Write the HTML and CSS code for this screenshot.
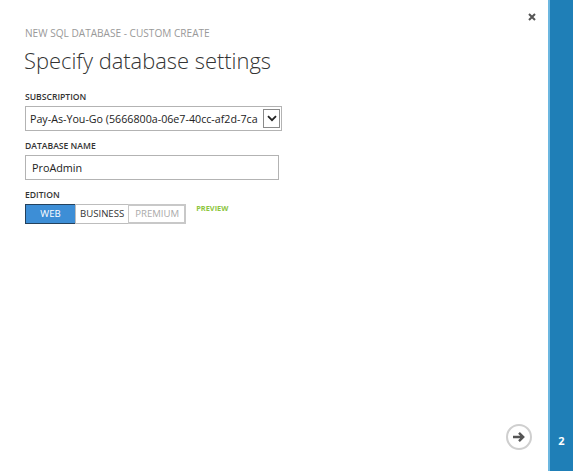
FILE: index.html
```html
<!DOCTYPE html>
<html>
<head>
<meta charset="utf-8">
<link rel="stylesheet" href="styles.css">
</head>
<body>
<div class="wizard">
  <div class="main">
    <div class="content">
      <div class="kicker">NEW SQL DATABASE - CUSTOM CREATE</div>
      <h1 class="title">Specify database settings</h1>
      <div class="field">
        <div class="label">SUBSCRIPTION</div>
        <div class="select">
          <span class="select-text">Pay-As-You-Go (5666800a-06e7-40cc-af2d-7ca</span>
          <span class="select-btn">
            <svg width="10" height="7" viewBox="0 0 10 7"><path d="M1 1.2 L5 5.2 L9 1.2" fill="none" stroke="#222" stroke-width="1.8"/></svg>
          </span>
        </div>
      </div>
      <div class="field">
        <div class="label">DATABASE NAME</div>
        <div class="input">ProAdmin</div>
      </div>
      <div class="field">
        <div class="label">EDITION</div>
        <div class="edition-row">
          <div class="seg">
            <span class="seg-item active">WEB</span>
            <span class="seg-item">BUSINESS</span>
            <span class="seg-item disabled">PREMIUM</span>
          </div>
          <span class="preview">PREVIEW</span>
        </div>
      </div>
    </div>
    <div class="footer">
      <span class="next">
        <svg width="14" height="12" viewBox="0 0 14 12"><path d="M1 6 H11 M7 1.8 L11.2 6 L7 10.2" fill="none" stroke="#555" stroke-width="2.4"/></svg>
      </span>
    </div>
    <span class="close">
      <svg width="8" height="8" viewBox="0 0 8 8"><path d="M1 1 L7 7 M7 1 L1 7" stroke="#555" stroke-width="2"/></svg>
    </span>
  </div>
  <div class="side">
    <span class="step">2</span>
  </div>
</div>
</body>
</html>
```
FILE: styles.css
```css
html, body {
  margin: 0;
  padding: 0;
  background: #fff;
}
body {
  font-family: "Open Sans", "Segoe UI", sans-serif;
  color: #222;
}
.wizard {
  display: flex;
  width: 573px;
  height: 471px;
}
.main {
  position: relative;
  flex: 1;
  display: flex;
  flex-direction: column;
  justify-content: space-between;
}
.content {
  padding: 26px 0 0 25px;
}
.kicker {
  font-size: 10.1px;
  color: #999;
  line-height: 14px;
}
.title {
  margin: 7px 0 16px -1px;
  font-size: 21.9px;
  font-weight: 300;
  color: #333;
  line-height: 28px;
}
.field {
  margin-top: 9px;
}
.title + .field {
  margin-top: 0;
}
.label {
  font-size: 8.6px;
  font-weight: 600;
  color: #333;
  line-height: 12px;
  margin-bottom: 3px;
}
.select {
  display: flex;
  align-items: center;
  width: 251px;
  height: 23px;
  border: 1px solid #b3b3b3;
  padding-left: 4px;
}
.select-text {
  flex: 1;
  font-size: 10.7px;
  color: #222;
  white-space: nowrap;
  overflow: hidden;
}
.select-btn {
  width: 15px;
  height: 17px;
  border: 1px solid #8a8a8a;
  display: flex;
  align-items: center;
  justify-content: center;
  margin-right: 1px;
  background: #fff;
}
.input {
  width: 246px;
  height: 23px;
  border: 1px solid #b3b3b3;
  padding-left: 6px;
  font-size: 10.8px;
  line-height: 23px;
  color: #222;
}
.edition-row {
  display: flex;
  align-items: flex-start;
}
.seg {
  display: flex;
}
.seg-item {
  height: 18px;
  border: 1px solid #bdbdbd;
  font-size: 9.6px;
  line-height: 18px;
  padding: 0 4px;
  color: #333;
  margin-left: -1px;
}
.seg-item:first-child {
  margin-left: 0;
}
.seg-item.active {
  background: #3d8ed6;
  color: #fff;
  border: 1px solid #24415c;
  width: 49px;
  padding: 0;
  text-align: center;
}
.seg-item.disabled {
  color: #aaa;
  border-color: #c8c8c8;
  border-width: 2px 2px 2px 1px;
  height: 16px;
  line-height: 16px;
  padding: 0 5px 0 6px;
}
.preview {
  margin: 0 0 0 10px;
  font-size: 7.4px;
  font-weight: 700;
  color: #8dc63f;
  line-height: 8px;
}
.footer {
  display: flex;
  justify-content: flex-end;
  padding: 0 16px 21px 0;
}
.next {
  width: 22px;
  height: 22px;
  border: 2px solid #cfcfcf;
  border-radius: 50%;
  display: flex;
  align-items: center;
  justify-content: center;
}
.close {
  position: absolute;
  top: 13px;
  right: 12px;
  display: flex;
}
.side {
  width: 23px;
  background: #1f7fb7;
  border-left: 2px solid #6cb7e0;
  display: flex;
  align-items: flex-end;
  justify-content: center;
}
.step {
  color: #fff;
  font-weight: 700;
  font-size: 11px;
  line-height: 14px;
  margin-bottom: 23px;
}
```
